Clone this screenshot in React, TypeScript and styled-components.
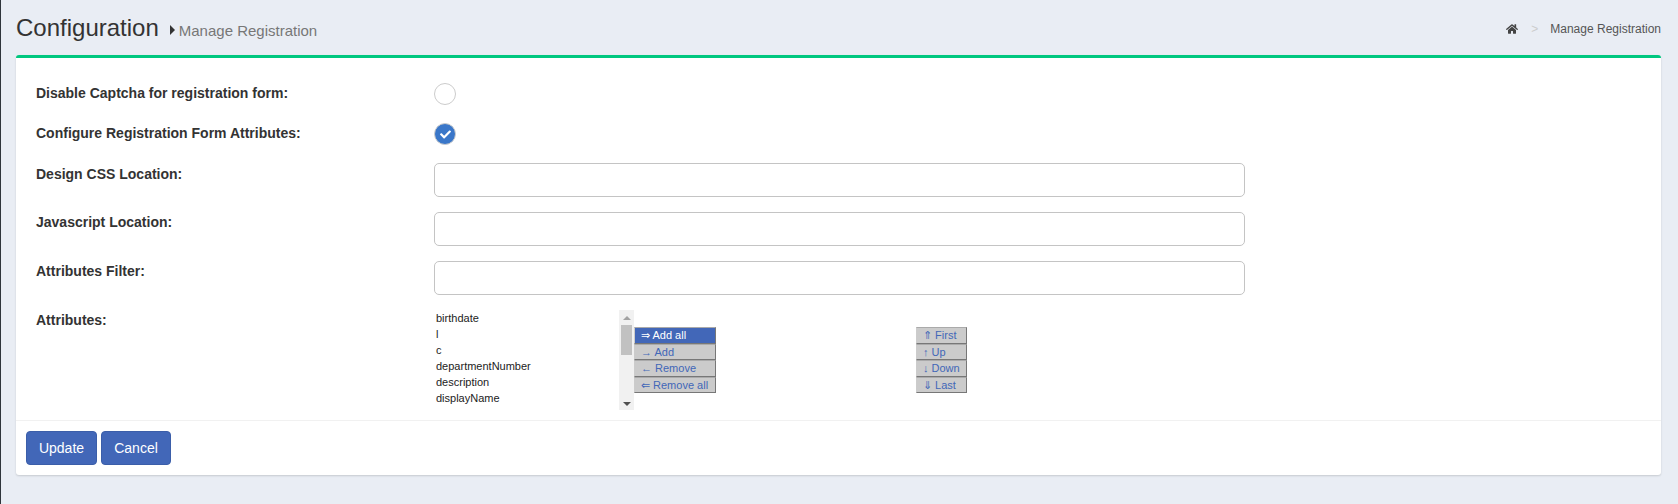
import React from "react";
import styled, { createGlobalStyle } from "styled-components";
import { FaHome, FaCheck } from "react-icons/fa";

const GlobalStyle = createGlobalStyle`
  html, body {
    margin: 0;
    padding: 0;
    background: #e9edf4;
    font-family: "Liberation Sans", Arial, sans-serif;
    color: #333;
  }
`;

const Page = styled.div`
  width: 1678px;
  height: 504px;
  box-sizing: border-box;
  border-left: 1px solid #2f353b;
  padding: 0 15px;
  overflow: hidden;
`;

const Header = styled.div`
  width: 1645px;
  height: 55px;
  display: flex;
  align-items: center;
  justify-content: space-between;
`;

const TitleGroup = styled.div`
  display: flex;
  align-items: baseline;
`;

const Title = styled.h1`
  margin: 0;
  font-size: 24px;
  font-weight: 400;
  color: #333;
`;

const SubTitle = styled.span`
  display: inline-flex;
  align-items: baseline;
  font-size: 15px;
  color: #777;
  margin-left: 11px;
`;

const Caret = styled.span`
  width: 0;
  height: 0;
  align-self: center;
  margin-right: 4px;
  border-top: 5px solid transparent;
  border-bottom: 5px solid transparent;
  border-left: 5px solid #333;
`;

const Crumbs = styled.div`
  display: flex;
  align-items: center;
  margin-top: 3px;
  font-size: 12px;
  color: #555;
  svg {
    color: #444;
    width: 12px;
    height: 12px;
  }
`;

const CrumbSep = styled.span`
  color: #ccc;
  margin: 0 12px 0 13px;
`;

const Card = styled.div`
  width: 1645px;
  height: 420px;
  box-sizing: border-box;
  background: #fff;
  border-top: 3px solid #00c77f;
  border-radius: 3px;
  box-shadow: 0 1px 2px rgba(0, 0, 0, 0.15);
  display: flex;
  flex-direction: column;
`;

const Body = styled.div`
  flex: 1;
  padding: 25px 20px 0;
`;

const Row = styled.div<{ $h: number }>`
  display: flex;
  height: ${(p) => p.$h}px;
`;

const Label = styled.label<{ $top: number }>`
  width: 398px;
  flex: none;
  padding-top: ${(p) => p.$top}px;
  font-size: 14px;
  font-weight: 700;
  color: #333;
`;

const Radio = styled.span<{ $on?: boolean }>`
  width: 22px;
  height: 22px;
  box-sizing: border-box;
  border-radius: 50%;
  border: 1px solid #ccc;
  background: ${(p) => (p.$on ? "#3a77c9" : "#fff")};
  display: flex;
  align-items: center;
  justify-content: center;
  align-self: flex-start;
  svg {
    color: #fff;
    width: 11px;
    height: 11px;
  }
`;

const TextInput = styled.input`
  width: 811px;
  height: 34px;
  box-sizing: border-box;
  border: 1px solid #c4c4c4;
  border-radius: 5px;
  background: #fff;
`;

const Shuttle = styled.div`
  display: flex;
  align-items: flex-start;
`;

const ListBox = styled.div`
  width: 200px;
  height: 100px;
  display: flex;
`;

const ListItems = styled.ul`
  flex: 1;
  margin: 0;
  padding: 0 2px;
  list-style: none;
  font-size: 11px;
  line-height: 16px;
  color: #222;
`;

const ScrollBar = styled.div`
  width: 15px;
  background: #f1f1f1;
  display: flex;
  flex-direction: column;
  align-items: center;
  justify-content: space-between;
  padding: 6px 0 4px;
  box-sizing: border-box;
  position: relative;
`;

const ScrollThumb = styled.div`
  position: absolute;
  top: 15px;
  left: 2px;
  width: 11px;
  height: 30px;
  background: #c1c1c1;
`;

const Arrow = styled.span<{ $up?: boolean; $dark?: boolean }>`
  width: 0;
  height: 0;
  border-left: 4px solid transparent;
  border-right: 4px solid transparent;
  ${(p) =>
    p.$up
      ? `border-bottom: 4px solid ${p.$dark ? "#505050" : "#a3a3a3"};`
      : `border-top: 4px solid ${p.$dark ? "#505050" : "#a3a3a3"};`}
`;

const ButtonStack = styled.div<{ $w: number; $gap: number }>`
  width: ${(p) => p.$w}px;
  margin-top: 17px;
  margin-right: ${(p) => p.$gap}px;
  display: flex;
  flex-direction: column;
`;

const ShuttleButton = styled.div<{ $active?: boolean }>`
  height: 16.5px;
  box-sizing: border-box;
  border-top: 1px solid #aaa;
  border-left: 1px solid #ccc;
  border-right: 1px solid #777;
  border-bottom: 1px solid #777;
  background: ${(p) => (p.$active ? "#4267b8" : "#cbcbcb")};
  color: ${(p) => (p.$active ? "#fff" : "#4267b8")};
  font-size: 11px;
  line-height: 14px;
  padding-left: 6px;
  white-space: nowrap;
`;

const Footer = styled.div`
  height: 55px;
  box-sizing: border-box;
  border-top: 1px solid #f1f1f1;
  padding: 10px;
  display: flex;
  gap: 4px;
`;

const ActionButton = styled.button<{ $w: number }>`
  width: ${(p) => p.$w}px;
  height: 34px;
  background: #4267b8;
  border: 1px solid #3b5ea9;
  border-radius: 4px;
  color: #fff;
  font-family: inherit;
  font-size: 14px;
  padding: 0;
`;

const attributes = ["birthdate", "l", "c", "departmentNumber", "description", "displayName"];
const addButtons = ["⇒ Add all", "→ Add", "← Remove", "⇐ Remove all"];
const orderButtons = ["⇑ First", "↑ Up", "↓ Down", "⇓ Last"];

const App = () => (
  <Page>
    <GlobalStyle />
    <Header>
      <TitleGroup>
        <Title>Configuration</Title>
        <SubTitle>
          <Caret />
          Manage Registration
        </SubTitle>
      </TitleGroup>
      <Crumbs>
        <FaHome />
        <CrumbSep>&gt;</CrumbSep>
        Manage Registration
      </Crumbs>
    </Header>
    <Card>
      <Body>
        <Row $h={40}>
          <Label $top={2}>Disable Captcha for registration form:</Label>
          <Radio />
        </Row>
        <Row $h={40}>
          <Label $top={2}>Configure Registration Form Attributes:</Label>
          <Radio $on>
            <FaCheck />
          </Radio>
        </Row>
        <Row $h={49}>
          <Label $top={3}>Design CSS Location:</Label>
          <TextInput />
        </Row>
        <Row $h={49}>
          <Label $top={2}>Javascript Location:</Label>
          <TextInput />
        </Row>
        <Row $h={49}>
          <Label $top={2}>Attributes Filter:</Label>
          <TextInput />
        </Row>
        <Row $h={52}>
          <Label $top={2}>Attributes:</Label>
          <Shuttle>
            <ListBox>
              <ListItems>
                {attributes.map((a) => (
                  <li key={a}>{a}</li>
                ))}
              </ListItems>
              <ScrollBar>
                <Arrow $up />
                <ScrollThumb />
                <Arrow $dark />
              </ScrollBar>
            </ListBox>
            <ButtonStack $w={82} $gap={200}>
              {addButtons.map((b, i) => (
                <ShuttleButton key={b} $active={i === 0}>
                  {b}
                </ShuttleButton>
              ))}
            </ButtonStack>
            <ButtonStack $w={51} $gap={0}>
              {orderButtons.map((b) => (
                <ShuttleButton key={b}>{b}</ShuttleButton>
              ))}
            </ButtonStack>
          </Shuttle>
        </Row>
      </Body>
      <Footer>
        <ActionButton $w={71}>Update</ActionButton>
        <ActionButton $w={70}>Cancel</ActionButton>
      </Footer>
    </Card>
  </Page>
);

export default App;
